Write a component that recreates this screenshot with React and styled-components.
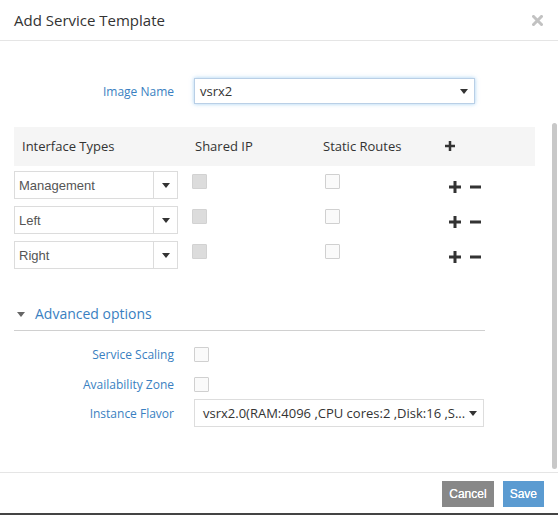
import React from "react";
import styled, { createGlobalStyle } from "styled-components";

const GlobalStyle = createGlobalStyle`
  body {
    margin: 0;
    background: #fff;
    font-family: "Open Sans", "Liberation Sans", sans-serif;
    color: #333;
  }
`;

const Modal = styled.div`
  width: 558px;
  height: 515px;
  display: flex;
  flex-direction: column;
  box-sizing: border-box;
  border-bottom: 2px solid #444;
  background: #fff;
`;

const Header = styled.div`
  height: 40px;
  flex: none;
  display: flex;
  align-items: center;
  justify-content: space-between;
  padding: 0 15px 0 14px;
  border-bottom: 1px solid #e5e5e5;

  h4 {
    margin: 0;
    font-size: 15px;
    font-weight: 400;
    color: #333;
  }
`;

const Body = styled.div`
  position: relative;
  flex: 1;
  overflow: hidden;
  padding: 37px 0 0 14px;
`;

const ScrollThumb = styled.div`
  position: absolute;
  right: 1px;
  top: 82px;
  width: 5px;
  height: 346px;
  border-radius: 3px;
  background: #c8c8c8;
`;

const FormRow = styled.div`
  display: grid;
  grid-template-columns: 160px ${(p) => p.$field || 281}px;
  column-gap: 20px;
  align-items: center;
  height: ${(p) => p.$h || 30}px;
`;

const Label = styled.label`
  text-align: right;
  font-size: 12px;
  color: #3a7fc1;
`;

const Select = styled.div`
  box-sizing: border-box;
  height: ${(p) => p.$h || 27}px;
  display: flex;
  align-items: center;
  justify-content: space-between;
  padding: 0 6px 0 ${(p) => p.$pl || 8}px;
  border: 1px solid ${(p) => (p.$focus ? "#b9cfe6" : "#ddd")};
  box-shadow: ${(p) => (p.$focus ? "0 0 4px rgba(102,175,233,0.6)" : "none")};
  font-size: 13px;
  color: #333;
  white-space: nowrap;
`;

const TypeSelect = styled.div`
  box-sizing: border-box;
  width: 164px;
  height: 28px;
  display: flex;
  border: 1px solid #dcdcdc;
  font-family: "Liberation Sans", Arial, sans-serif;
  font-size: 13px;
  color: #555;

  span {
    flex: 1;
    display: flex;
    align-items: center;
    padding-left: 4px;
    border-right: 1px solid #dcdcdc;
  }

  i {
    width: 23px;
    display: flex;
    align-items: center;
    justify-content: center;
  }
`;

const Caret = ({ color = "#333" }) => (
  <svg width="8" height="5" viewBox="0 0 8 5">
    <path d="M0 0 H8 L4 5 Z" fill={color} />
  </svg>
);

const Table = styled.div`
  width: 521px;
  margin-top: 23px;
`;

const Grid = styled.div`
  display: grid;
  grid-template-columns: 178px 133px 124px auto;
  align-items: ${(p) => (p.$head ? "center" : "start")};
  height: ${(p) => (p.$head ? 39 : 28)}px;
  background: ${(p) => (p.$head ? "#f5f5f5" : "transparent")};
  margin-top: ${(p) => (p.$head ? 0 : p.$first ? 5 : 7)}px;
  padding-bottom: ${(p) => (p.$head ? 2 : 0)}px;
  box-sizing: ${(p) => (p.$head ? "border-box" : "content-box")};
  font-size: 13px;
  color: #333;
`;

const HeadCell = styled.div`
  padding-left: ${(p) => p.$pl || 0}px;
  margin-left: ${(p) => p.$ml || 0}px;
  display: flex;
  align-items: center;
`;

const Check = styled.div`
  box-sizing: border-box;
  width: 15px;
  height: 15px;
  margin-top: ${(p) => p.$mt || 0}px;
  border: 1px solid ${(p) => (p.$disabled ? "#d2d2d2" : "#d0d0d0")};
  border-radius: 1px;
  background: ${(p) => (p.$disabled ? "#dcdcdc" : "#fafafa")};
`;

const Actions = styled.div`
  display: flex;
  gap: 9px;
  align-items: center;
  height: 28px;
  padding-top: 4px;
  box-sizing: border-box;
`;

const Plus = ({ size = 12 }) => (
  <svg width={size} height={size} viewBox="0 0 12 12">
    <rect x="4.5" y="0" width="3" height="12" fill="#333" />
    <rect x="0" y="4.5" width="12" height="3" fill="#333" />
  </svg>
);

const Minus = () => (
  <svg width="11" height="12" viewBox="0 0 11 12">
    <rect x="0" y="4.5" width="11" height="3" fill="#333" />
  </svg>
);

const Advanced = styled.div`
  width: 471px;
  margin-top: 35px;
  padding-bottom: 6px;
  border-bottom: 1px solid #d0d0d0;
  display: flex;
  align-items: center;
  gap: 10px;
  padding-left: 3px;
  box-sizing: border-box;
  font-size: 14px;
  line-height: 20px;
  color: #3a7fc1;
`;

const AdvancedRows = styled.div`
  margin-top: 8px;
`;

const Footer = styled.div`
  flex: none;
  height: 41px;
  box-sizing: border-box;
  border-top: 1px solid #e5e5e5;
  display: flex;
  justify-content: flex-end;
  align-items: flex-start;
  gap: 9px;
  padding: 8px 14px 0 0;
`;

const Button = styled.button`
  height: 26px;
  padding: 0 ${(p) => p.$px || 7}px;
  border: none;
  border-radius: 0;
  background: ${(p) => (p.$primary ? "#5b9bd1" : "#888")};
  color: #fff;
  font-family: "Liberation Sans", Arial, sans-serif;
  font-size: 12px;
  text-shadow: 0 0 0.6px #fff;
`;

const CloseIcon = () => (
  <svg width="11" height="11" viewBox="0 0 11 11">
    <path d="M1.5 1.5 L9.5 9.5 M9.5 1.5 L1.5 9.5" stroke="#c2c2c2" strokeWidth="3" strokeLinecap="square" />
  </svg>
);

const interfaces = ["Management", "Left", "Right"];

export default function App() {
  return (
    <>
      <GlobalStyle />
      <Modal>
        <Header>
          <h4>Add Service Template</h4>
          <CloseIcon />
        </Header>
        <Body>
          <FormRow $h={26}>
            <Label>Image Name</Label>
            <Select $focus $h={26} $pl={5}>
              vsrx2
              <Caret />
            </Select>
          </FormRow>

          <Table>
            <Grid $head>
              <HeadCell $pl={8}>Interface Types</HeadCell>
              <HeadCell $pl={3}>Shared IP</HeadCell>
              <HeadCell $ml={-2}>Static Routes</HeadCell>
              <HeadCell $ml={-4}>
                <Plus size={10} />
              </HeadCell>
            </Grid>
            {interfaces.map((name, i) => (
              <Grid key={name} $first={i === 0}>
                <TypeSelect>
                  <span>{name}</span>
                  <i>
                    <Caret />
                  </i>
                </TypeSelect>
                <Check $disabled $mt={3} />
                <Check $mt={3} />
                <Actions>
                  <Plus />
                  <Minus />
                </Actions>
              </Grid>
            ))}
          </Table>

          <Advanced>
            <Caret color="#666" />
            Advanced options
          </Advanced>

          <AdvancedRows>
            <FormRow>
              <Label>Service Scaling</Label>
              <Check />
            </FormRow>
            <FormRow>
              <Label>Availability Zone</Label>
              <Check />
            </FormRow>
            <FormRow $field={290} $h={27}>
              <Label>Instance Flavor</Label>
              <Select $h={28}>
                vsrx2.0(RAM:4096 ,CPU cores:2 ,Disk:16 ,S...
                <Caret />
              </Select>
            </FormRow>
          </AdvancedRows>

          <ScrollThumb />
        </Body>
        <Footer>
          <Button>Cancel</Button>
          <Button $primary>Save</Button>
        </Footer>
      </Modal>
    </>
  );
}
